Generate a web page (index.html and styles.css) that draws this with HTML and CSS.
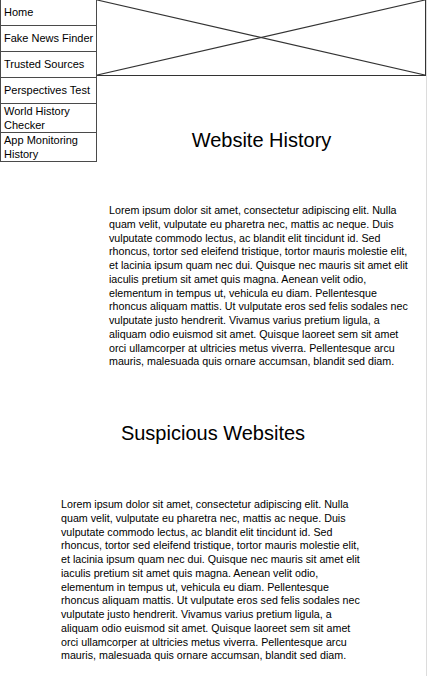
FILE: index.html
```html
<!DOCTYPE html>
<html>
<head>
<meta charset="utf-8">
<link rel="stylesheet" href="styles.css">
</head>
<body>
<div class="page">
  <div class="top">
    <nav class="nav">
      <a class="nav-item" href="#">Home</a>
      <a class="nav-item" href="#">Fake News Finder</a>
      <a class="nav-item" href="#">Trusted Sources</a>
      <a class="nav-item" href="#">Perspectives Test</a>
      <a class="nav-item two" href="#">World History Checker</a>
      <a class="nav-item two" href="#">App Monitoring History</a>
    </nav>
    <main class="main">
      <div class="placeholder">
        <svg class="x" viewBox="0 0 100 100" preserveAspectRatio="none">
          <line x1="0" y1="0" x2="100" y2="100" vector-effect="non-scaling-stroke"/>
          <line x1="0" y1="100" x2="100" y2="0" vector-effect="non-scaling-stroke"/>
        </svg>
      </div>
      <h1 class="title">Website History</h1>
      <p class="text text-one">Lorem ipsum dolor sit amet, consectetur adipiscing elit. Nulla quam velit, vulputate eu pharetra nec, mattis ac neque. Duis vulputate commodo lectus, ac blandit elit tincidunt id. Sed rhoncus, tortor sed eleifend tristique, tortor mauris molestie elit, et lacinia ipsum quam nec dui. Quisque nec mauris sit amet elit iaculis pretium sit amet quis magna. Aenean velit odio, elementum in tempus ut, vehicula eu diam. Pellentesque rhoncus aliquam mattis. Ut vulputate eros sed felis sodales nec vulputate justo hendrerit. Vivamus varius pretium ligula, a aliquam odio euismod sit amet. Quisque laoreet sem sit amet orci ullamcorper at ultricies metus viverra. Pellentesque arcu mauris, malesuada quis ornare accumsan, blandit sed diam.</p>
    </main>
  </div>
  <section class="second">
    <h1 class="title">Suspicious Websites</h1>
    <p class="text text-two">Lorem ipsum dolor sit amet, consectetur adipiscing elit. Nulla quam velit, vulputate eu pharetra nec, mattis ac neque. Duis vulputate commodo lectus, ac blandit elit tincidunt id. Sed rhoncus, tortor sed eleifend tristique, tortor mauris molestie elit, et lacinia ipsum quam nec dui. Quisque nec mauris sit amet elit iaculis pretium sit amet quis magna. Aenean velit odio, elementum in tempus ut, vehicula eu diam. Pellentesque rhoncus aliquam mattis. Ut vulputate eros sed felis sodales nec vulputate justo hendrerit. Vivamus varius pretium ligula, a aliquam odio euismod sit amet. Quisque laoreet sem sit amet orci ullamcorper at ultricies metus viverra. Pellentesque arcu mauris, malesuada quis ornare accumsan, blandit sed diam.</p>
  </section>
</div>
</body>
</html>
```
FILE: styles.css
```css
html, body {
  margin: 0;
  padding: 0;
  background: #fff;
}
body {
  font-family: "Liberation Sans", Arial, Helvetica, sans-serif;
  color: #000;
}
.page {
  width: 427px;
  box-sizing: border-box;
  border-right: 1px solid #dcdcdc;
  min-height: 676px;
}
.top {
  display: flex;
  align-items: flex-start;
}
.nav {
  width: 97px;
  flex: none;
  display: flex;
  flex-direction: column;
}
.nav-item {
  display: block;
  box-sizing: border-box;
  border-left: 1px solid #4a4a4a;
  border-right: 1px solid #4a4a4a;
  border-bottom: 1px solid #4a4a4a;
  padding: 5px 0 5px 3px;
  height: 26px;
  font-size: 11px;
  line-height: 15px;
  color: #000;
  text-decoration: none;
}
.nav-item.two {
  padding: 0 0 0 3px;
  height: 29px;
  line-height: 14px;
}
.main {
  flex: 1;
  min-width: 0;
  display: flex;
  flex-direction: column;
}
.placeholder {
  height: 76px;
  box-sizing: border-box;
  border-bottom: 1px solid #333;
  border-right: 1px solid #333;
}
.x {
  display: block;
  width: 100%;
  height: 100%;
}
.x line {
  stroke: #333;
  stroke-width: 1.2;
}
.title {
  margin: 0;
  font-size: 20px;
  line-height: 23px;
  font-weight: normal;
  text-align: center;
}
.main .title {
  margin-top: 53px;
}
.text {
  margin: 0;
  font-size: 10.7px;
  line-height: 13.75px;
  width: 304px;
}
.text-one {
  margin-top: 52px;
  margin-left: 12px;
}
.second {
  display: flex;
  flex-direction: column;
  padding-top: 53px;
  padding-bottom: 20px;
}
.text-two {
  margin-top: 53px;
  margin-left: 61px;
}
```
